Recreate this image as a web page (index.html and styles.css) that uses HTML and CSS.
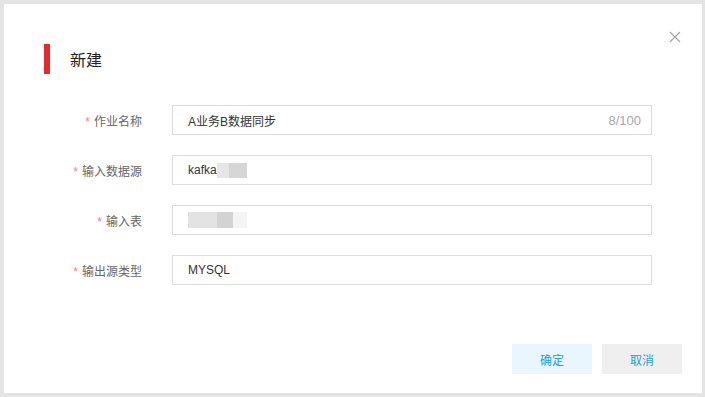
FILE: index.html
```html
<!DOCTYPE html>
<html lang="zh-CN">
<head>
  <meta charset="UTF-8">
  <title>新建</title>
  <link rel="stylesheet" href="styles.css">
</head>
<body>
  <div class="dialog">
    <button class="close" aria-label="关闭">
      <svg width="12" height="12" viewBox="0 0 12 12"><path d="M1 1 L11 11 M11 1 L1 11" stroke="#a3a3a3" stroke-width="1.1" fill="none"/></svg>
    </button>

    <div class="dialog-title">
      <span class="bar"></span>
      <span class="title-text">新建</span>
    </div>

    <div class="form">
      <div class="row">
        <label class="label"><i>*</i>作业名称</label>
        <div class="field">
          <span class="value">A业务B数据同步</span>
          <span class="count">8/100</span>
        </div>
      </div>
      <div class="row">
        <label class="label"><i>*</i>输入数据源</label>
        <div class="field">
          <span class="value">kafka</span><span class="mask mask-a"></span>
        </div>
      </div>
      <div class="row">
        <label class="label"><i>*</i>输入表</label>
        <div class="field">
          <span class="mask mask-b"></span><span class="mask mask-c"></span>
        </div>
      </div>
      <div class="row">
        <label class="label"><i>*</i>输出源类型</label>
        <div class="field">
          <span class="value">MYSQL</span>
        </div>
      </div>
    </div>

    <div class="footer">
      <button class="btn btn-ok">确定</button>
      <button class="btn btn-cancel">取消</button>
    </div>
  </div>
</body>
</html>
```

FILE: styles.css
```css
body {
  margin: 0;
  background: #e4e4e4;
  font-family: "Liberation Sans", "Noto Sans CJK SC", sans-serif;
  height: 397px;
  overflow: hidden;
}

.dialog {
  position: relative;
  box-sizing: border-box;
  margin: 4px 3px 0 4px;
  width: 698px;
  height: 389px;
  background: #fff;
  padding: 40px 20px 0 40px;
}

.close {
  position: absolute;
  top: 27px;
  right: 21px;
  padding: 0;
  border: none;
  background: none;
  width: 12px;
  height: 12px;
  cursor: pointer;
}
.close svg {
  display: block;
}

.dialog-title {
  display: flex;
  align-items: center;
  height: 30px;
}
.bar {
  width: 6px;
  height: 30px;
  background: #e8272b;
}
.title-text {
  margin-left: 20px;
  font-size: 16px;
  color: #222;
}

.form {
  margin-top: 31px;
  display: flex;
  flex-direction: column;
  gap: 20px;
}
.row {
  display: flex;
  align-items: center;
  height: 30px;
}
.label {
  width: 98px;
  text-align: right;
  font-size: 12px;
  color: #666;
}
.label i {
  font-style: normal;
  color: #f07f7f;
  margin-right: 4px;
}
.field {
  margin-left: 30px;
  box-sizing: border-box;
  width: 480px;
  height: 30px;
  border: 1px solid #dcdcdc;
  display: flex;
  align-items: center;
  padding: 0 10px 0 15px;
  font-size: 12px;
  color: #333;
}
.count {
  margin-left: auto;
  font-size: 13px;
  color: #a8a8a8;
}
.mask {
  display: inline-block;
  height: 15px;
  background: #dedede;
}
.mask-a {
  width: 30px;
  background: linear-gradient(90deg, #e6e6e6 0 40%, #d6d6d6 40% 100%);
}
.mask-b {
  width: 45px;
  height: 16px;
  background: linear-gradient(90deg, #e3e3e3 0 65%, #d3d3d3 65% 100%);
}
.mask-c {
  width: 14px;
  height: 16px;
  background: #f4f4f4;
}

.footer {
  margin-top: 59px;
  display: flex;
  justify-content: flex-end;
  gap: 10px;
}
.btn {
  width: 80px;
  height: 30px;
  border: none;
  font-family: inherit;
  font-size: 12px;
  color: #1a9fe0;
  cursor: pointer;
}
.btn-ok {
  background: #eaf6fd;
}
.btn-cancel {
  background: #efefef;
}
```
